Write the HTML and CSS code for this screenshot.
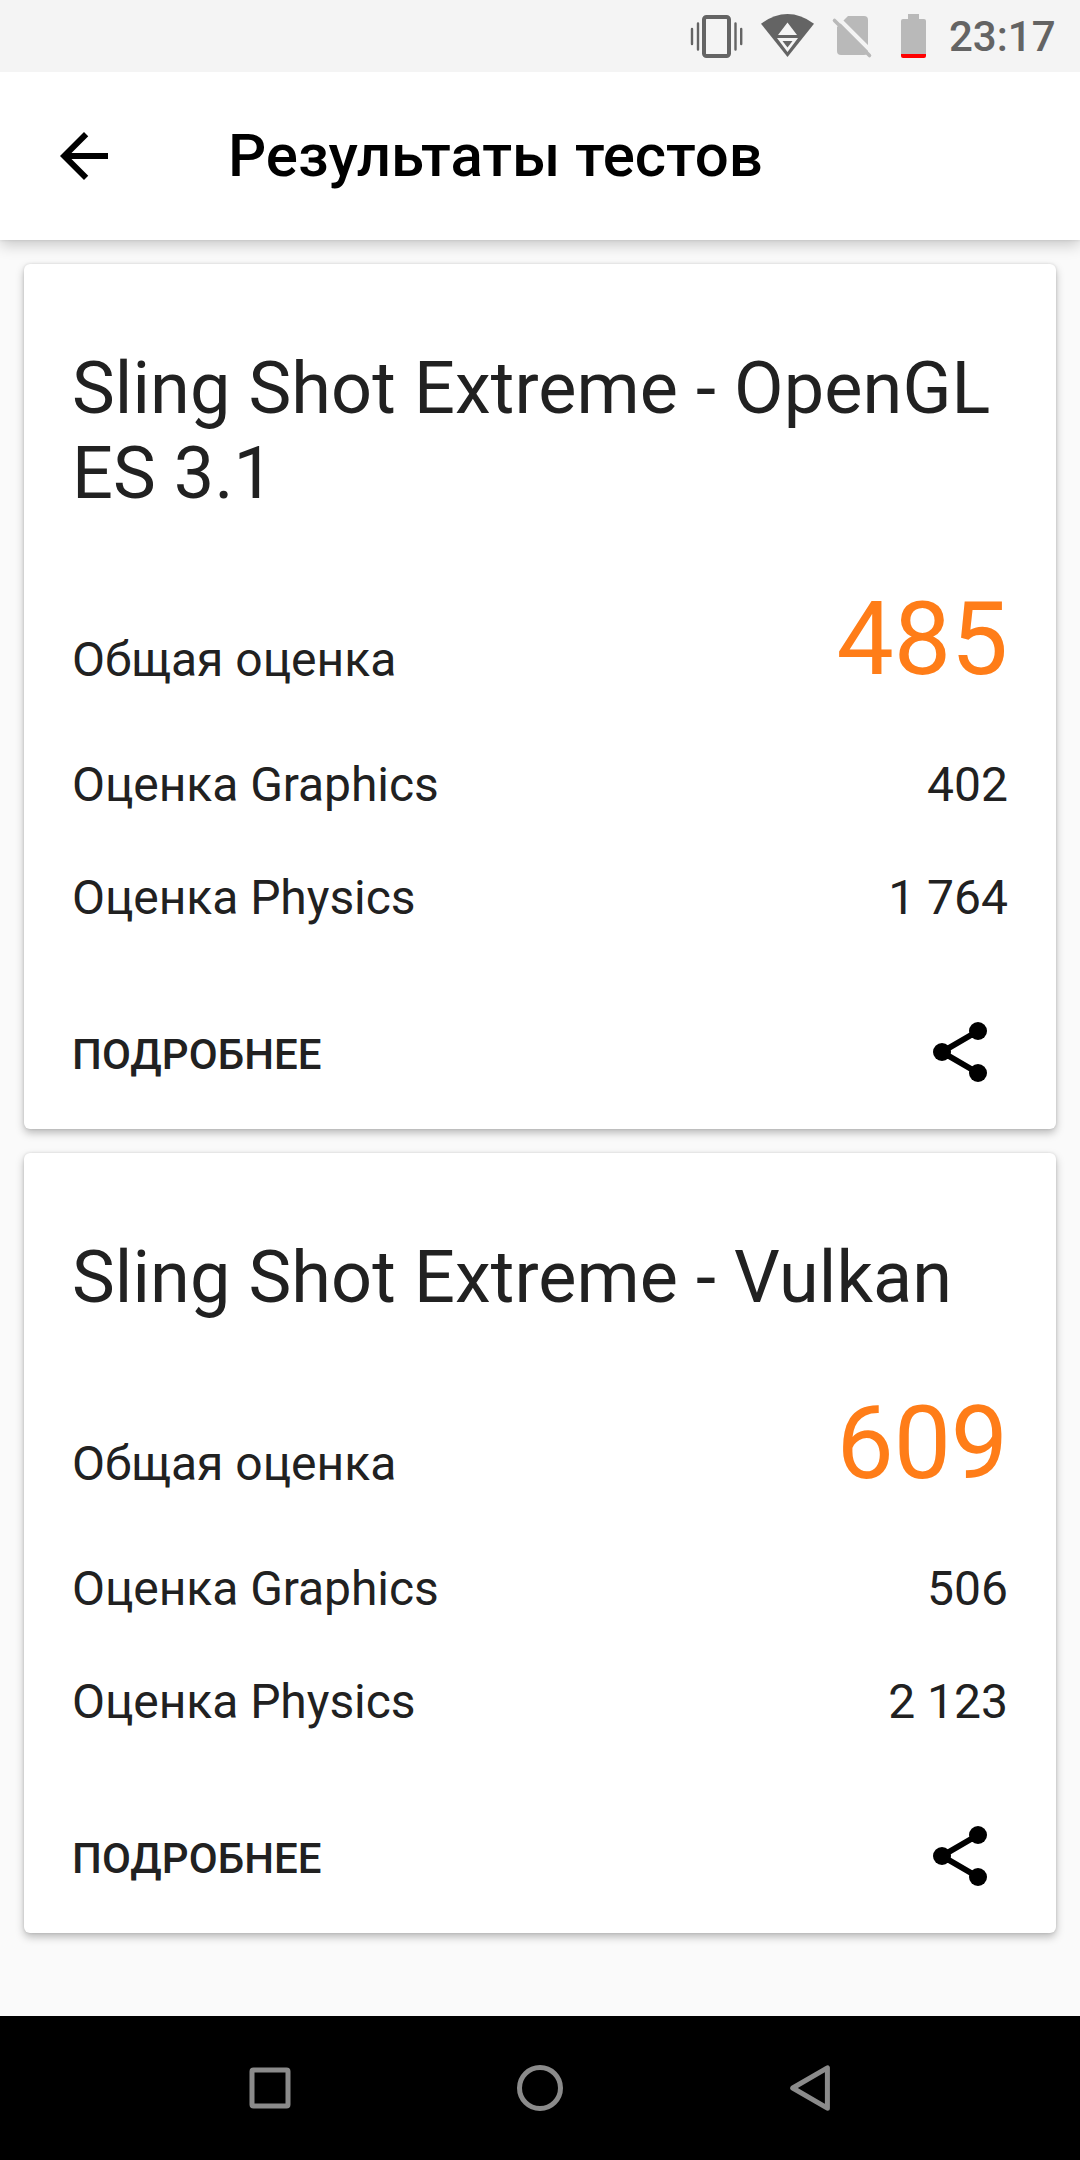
FILE: index.html
```html
<!DOCTYPE html>
<html lang="ru">
<head>
<meta charset="utf-8">
<title>Результаты тестов</title>
<link rel="stylesheet" href="styles.css">
</head>
<body>
<div class="screen">
  <div class="status-bar">
    <svg class="status-icons" width="250" height="72" viewBox="680 0 250 72">
      <g fill="none" stroke="#646464">
        <rect x="704" y="17" width="25" height="39" rx="2.5" stroke-width="4"/>
        <path stroke-width="2.4" stroke-linecap="round" d="M692 29v15M698 23.500v26M735.500 23.500v26M741.200 29v15"/>
      </g>
      <path fill="#646464" d="M761 23.700Q787.500 4.500 814 23.700L787.500 57z"/>
      <path fill="#f4f4f4" d="M787.500 22.500l9.500 12.500h-19zM777 38h21l-10.500 14z"/>
      <path fill="#646464" d="M782.500 41h10l-5 6.500z"/>
      <path fill="#b9b9b9" d="M848 16h16q4 0 4 4v31q0 4-4 4h-23q-4 0-4-4V27z"/>
      <path stroke="#f4f4f4" stroke-width="4" d="M836 16l38 38"/>
      <path stroke="#b9b9b9" stroke-width="3.600" stroke-linecap="round" d="M834.500 20.500l35 35"/>
      <path fill="#b9b9b9" d="M908 14h11v5h5q2 0 2 2v33h-25V21q0-2 2-2h5z"/>
      <path fill="#f00" d="M901 54h25v2q0 2-2 2h-21q-2 0-2-2z"/>
    </svg>
    <span class="clock">23:17</span>
  </div>
  <header class="app-bar">
    <svg class="icon" viewBox="0 0 24 24"><path d="M20 11H7.830l5.590-5.590L12 4l-8 8 8 8 1.410-1.410L7.830 13H20v-2z"/></svg>
    <h1 class="app-title">Результаты тестов</h1>
  </header>
  <main class="results">
    <section class="card">
      <h2 class="card-title">Sling Shot Extreme - OpenGL ES 3.1</h2>
      <div class="overall"><span class="label">Общая оценка</span><span class="score">485</span></div>
      <div class="row"><span class="row-label">Оценка Graphics</span><span>402</span></div>
      <div class="row"><span class="row-label">Оценка Physics</span><span>1 764</span></div>
      <div class="actions">
        <span class="details">ПОДРОБНЕЕ</span>
        <svg class="icon" viewBox="0 0 24 24"><path d="M18 5L6 12l12 7" fill="none" stroke="#000" stroke-width="2"/><circle cx="18" cy="5" r="3"/><circle cx="6" cy="12" r="3"/><circle cx="18" cy="19" r="3"/></svg>
      </div>
    </section>
    <section class="card">
      <h2 class="card-title">Sling Shot Extreme - Vulkan</h2>
      <div class="overall"><span class="label">Общая оценка</span><span class="score">609</span></div>
      <div class="row"><span class="row-label">Оценка Graphics</span><span>506</span></div>
      <div class="row"><span class="row-label">Оценка Physics</span><span>2 123</span></div>
      <div class="actions">
        <span class="details">ПОДРОБНЕЕ</span>
        <svg class="icon" viewBox="0 0 24 24"><path d="M18 5L6 12l12 7" fill="none" stroke="#000" stroke-width="2"/><circle cx="18" cy="5" r="3"/><circle cx="6" cy="12" r="3"/><circle cx="18" cy="19" r="3"/></svg>
      </div>
    </section>
  </main>
  <nav class="nav-bar">
    <svg viewBox="0 0 72 72"><rect x="18" y="18" width="36" height="36" rx="1.500"/></svg>
    <svg viewBox="0 0 72 72"><circle cx="36" cy="36" r="20.500"/></svg>
    <svg viewBox="0 0 72 72"><path d="M18.700 36L53.400 15.800v40.400z"/></svg>
  </nav>
</div>
</body>
</html>
```
FILE: styles.css
```css
* {
  box-sizing: border-box;
}

body {
  margin: 0;
  font-family: Roboto, sans-serif;
  color: #212121;
}

.screen {
  display: flex;
  flex-direction: column;
  width: 1080px;
  height: 2160px;
  background: #fafafa;
}

.status-bar {
  display: flex;
  flex: none;
  justify-content: flex-end;
  height: 72px;
  padding-right: 24px;
  background: #f4f4f4;
}

.status-icons {
  flex: none;
}

.clock {
  width: 126px;
  padding-left: 19px;
  font-size: 42px;
  font-weight: 500;
  line-height: 74px;
  white-space: nowrap;
  color: #646464;
}

.app-bar {
  display: flex;
  flex: none;
  align-items: center;
  gap: 108px;
  height: 168px;
  padding-left: 48px;
  background: #fff;
  box-shadow: 0 5px 14px rgba(0, 0, 0, 0.2), 0 0 3px rgba(0, 0, 0, 0.12);
  clip-path: inset(0 0 -24px);
}

.icon {
  display: block;
  flex: none;
  width: 72px;
  height: 72px;
  fill: #000;
}

.app-title {
  margin: 0;
  font-size: 60px;
  font-weight: 500;
  line-height: 70px;
  letter-spacing: -0.05px;
  color: #000;
}

.results {
  display: flex;
  flex: 1;
  flex-direction: column;
  gap: 24px;
  padding: 24px;
}

.card {
  padding: 82px 48px 41px;
  background: #fff;
  border-radius: 6px;
  box-shadow: 0 4px 8px rgba(0, 0, 0, 0.26), 0 0 3px rgba(0, 0, 0, 0.12);
}

.card-title {
  margin: 0 0 63px;
  font-size: 72px;
  font-weight: 400;
  line-height: 85px;
  letter-spacing: 0.11px;
}

.overall {
  display: flex;
  align-items: flex-end;
  justify-content: space-between;
  height: 120px;
  margin-bottom: 58px;
}

.label {
  margin-bottom: 11px;
  font-size: 48px;
  line-height: 56px;
}

.score {
  font-size: 102px;
  line-height: 120px;
  letter-spacing: -0.2px;
  color: #ff7d18;
}

.row {
  display: flex;
  justify-content: space-between;
  height: 56px;
  margin-bottom: 57px;
  font-size: 48px;
  line-height: 56px;
}

.row-label {
  letter-spacing: -0.06px;
}

.actions {
  display: flex;
  align-items: center;
  justify-content: space-between;
  height: 72px;
  margin-top: 90px;
  padding-right: 12px;
}

.details {
  margin-top: 5px;
  font-size: 42px;
  font-weight: 500;
  line-height: 50px;
  letter-spacing: 0.08px;
}

.nav-bar {
  display: flex;
  flex: none;
  align-items: center;
  justify-content: space-between;
  height: 144px;
  padding: 0 234px;
  background: #000;
}

.nav-bar svg {
  width: 72px;
  height: 72px;
  fill: none;
  stroke: #8b8b8b;
  stroke-width: 5;
  stroke-linejoin: round;
}
```
